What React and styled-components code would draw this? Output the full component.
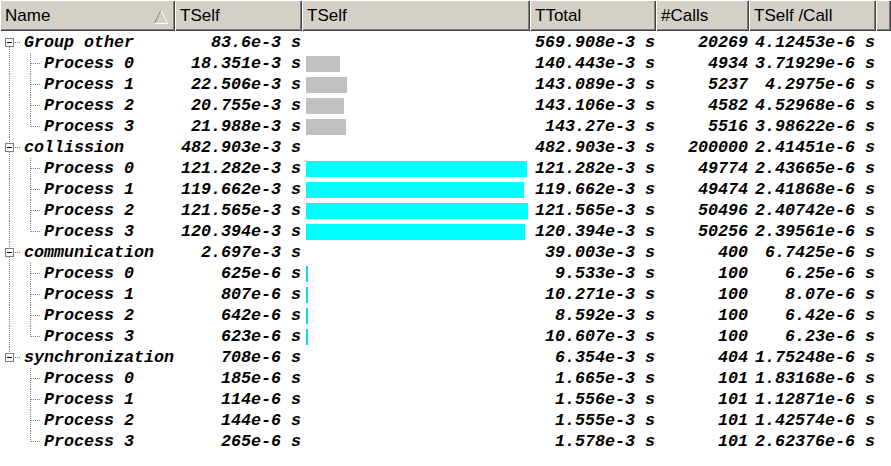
import React from "react";
import styled, { createGlobalStyle } from "styled-components";

const COLS = "175px 127px 228px 126px 93px 127px 1fr";

const groups = [
  {
    name: "Group other", tself: "83.6e-3 s", ttotal: "569.908e-3 s", calls: "20269", per: "4.12453e-6 s",
    color: "#c0c0c0",
    children: [
      ["18.351e-3 s", 18.351, "140.443e-3 s", "4934", "3.71929e-6 s"],
      ["22.506e-3 s", 22.506, "143.089e-3 s", "5237", "4.2975e-6 s"],
      ["20.755e-3 s", 20.755, "143.106e-3 s", "4582", "4.52968e-6 s"],
      ["21.988e-3 s", 21.988, "143.27e-3 s", "5516", "3.98622e-6 s"],
    ],
  },
  {
    name: "collission", tself: "482.903e-3 s", ttotal: "482.903e-3 s", calls: "200000", per: "2.41451e-6 s",
    color: "#00ffff",
    children: [
      ["121.282e-3 s", 121.282, "121.282e-3 s", "49774", "2.43665e-6 s"],
      ["119.662e-3 s", 119.662, "119.662e-3 s", "49474", "2.41868e-6 s"],
      ["121.565e-3 s", 121.565, "121.565e-3 s", "50496", "2.40742e-6 s"],
      ["120.394e-3 s", 120.394, "120.394e-3 s", "50256", "2.39561e-6 s"],
    ],
  },
  {
    name: "communication", tself: "2.697e-3 s", ttotal: "39.003e-3 s", calls: "400", per: "6.7425e-6 s",
    color: "#00e0e8",
    children: [
      ["625e-6 s", 0.625, "9.533e-3 s", "100", "6.25e-6 s"],
      ["807e-6 s", 0.807, "10.271e-3 s", "100", "8.07e-6 s"],
      ["642e-6 s", 0.642, "8.592e-3 s", "100", "6.42e-6 s"],
      ["623e-6 s", 0.623, "10.607e-3 s", "100", "6.23e-6 s"],
    ],
  },
  {
    name: "synchronization", tself: "708e-6 s", ttotal: "6.354e-3 s", calls: "404", per: "1.75248e-6 s",
    color: null,
    children: [
      ["185e-6 s", 0.185, "1.665e-3 s", "101", "1.83168e-6 s"],
      ["114e-6 s", 0.114, "1.556e-3 s", "101", "1.12871e-6 s"],
      ["144e-6 s", 0.144, "1.555e-3 s", "101", "1.42574e-6 s"],
      ["265e-6 s", 0.265, "1.578e-3 s", "101", "2.62376e-6 s"],
    ],
  },
];

const GlobalStyle = createGlobalStyle`
  body {
    margin: 0;
    background: #ffffff;
  }
`;

const Table = styled.div`
  width: 891px;
  height: 466px;
  overflow: hidden;
  background: #ffffff;
`;

const HeaderRow = styled.div`
  display: grid;
  grid-template-columns: ${COLS};
  height: 31px;
  margin-bottom: 1px;
  background: #d4d0c8;
`;

const HeaderCell = styled.div`
  display: flex;
  align-items: center;
  justify-content: space-between;
  padding: 1px 6px 0 5px;
  font-family: "Liberation Sans", Arial, sans-serif;
  font-size: 17px;
  color: #000;
  box-shadow: inset 1px 1px #ffffff, inset -1px -1px #404040, inset -2px -2px #808080;
`;

const Row = styled.div`
  display: grid;
  grid-template-columns: ${COLS};
  height: 21px;
  line-height: 21px;
  font-family: "Liberation Mono", "Courier New", monospace;
  font-weight: bold;
  font-style: italic;
  font-size: 16.67px;
  color: #000;
  white-space: pre;
`;

const NameCell = styled.div`
  display: flex;
  align-items: center;
  overflow: hidden;
`;

const NumCell = styled.div`
  text-align: right;
  padding-right: 1px;
  overflow: hidden;
`;

const BarCell = styled.div`
  display: flex;
  align-items: center;
  padding-left: 4px;
`;

const Bar = styled.div`
  height: 16px;
  background: ${({ color }) => color};
`;

const Tree = styled.svg`
  flex: none;
  display: block;
`;

const DOT = { stroke: "#808080", strokeDasharray: "1 1", strokeWidth: 1 };

const GroupGlyph = ({ first, last }) => (
  <Tree width="24" height="21" viewBox="0 0 24 21">
    {!first && <line x1="9.5" y1="0" x2="9.5" y2="6" {...DOT} />}
    {!last && <line x1="9.5" y1="15" x2="9.5" y2="21" {...DOT} />}
    <line x1="15" y1="10.5" x2="21" y2="10.5" {...DOT} />
    <rect x="5.5" y="6.5" width="8" height="8" fill="#fff" stroke="#808080" />
    <line x1="7" y1="10.5" x2="12" y2="10.5" stroke="#000" />
  </Tree>
);

const ChildGlyph = ({ groupLast, last }) => (
  <Tree width="44" height="21" viewBox="0 0 44 21">
    {!groupLast && <line x1="9.5" y1="0" x2="9.5" y2="21" {...DOT} />}
    <line x1="30.5" y1="0" x2="30.5" y2={last ? 10.5 : 21} {...DOT} />
    <line x1="31" y1="10.5" x2="41" y2="10.5" {...DOT} />
  </Tree>
);

const SortArrow = () => (
  <svg width="16" height="15" viewBox="0 0 16 15">
    <polyline points="1.5,14.5 8,1" fill="none" stroke="#808080" />
    <polyline points="8,1 14.5,14.5 1.5,14.5" fill="none" stroke="#ffffff" />
  </svg>
);

const barWidth = (ms) => Math.ceil(ms * 1.818);

export default function App() {
  return (
    <>
      <GlobalStyle />
      <Table>
        <HeaderRow>
          <HeaderCell>
            Name <SortArrow />
          </HeaderCell>
          <HeaderCell>TSelf</HeaderCell>
          <HeaderCell>TSelf</HeaderCell>
          <HeaderCell>TTotal</HeaderCell>
          <HeaderCell>#Calls</HeaderCell>
          <HeaderCell>TSelf /Call</HeaderCell>
          <HeaderCell />
        </HeaderRow>
        {groups.map((g, gi) => {
          const groupLast = gi === groups.length - 1;
          return (
            <React.Fragment key={g.name}>
              <Row>
                <NameCell>
                  <GroupGlyph first={gi === 0} last={groupLast} />
                  {g.name}
                </NameCell>
                <NumCell>{g.tself}</NumCell>
                <BarCell />
                <NumCell>{g.ttotal}</NumCell>
                <NumCell>{g.calls}</NumCell>
                <NumCell>{g.per}</NumCell>
                <div />
              </Row>
              {g.children.map((c, ci) => (
                <Row key={ci}>
                  <NameCell>
                    <ChildGlyph groupLast={groupLast} last={ci === g.children.length - 1} />
                    {`Process ${ci}`}
                  </NameCell>
                  <NumCell>{c[0]}</NumCell>
                  <BarCell>
                    {g.color && <Bar color={g.color} style={{ width: barWidth(c[1]) }} />}
                  </BarCell>
                  <NumCell>{c[2]}</NumCell>
                  <NumCell>{c[3]}</NumCell>
                  <NumCell>{c[4]}</NumCell>
                  <div />
                </Row>
              ))}
            </React.Fragment>
          );
        })}
      </Table>
    </>
  );
}
